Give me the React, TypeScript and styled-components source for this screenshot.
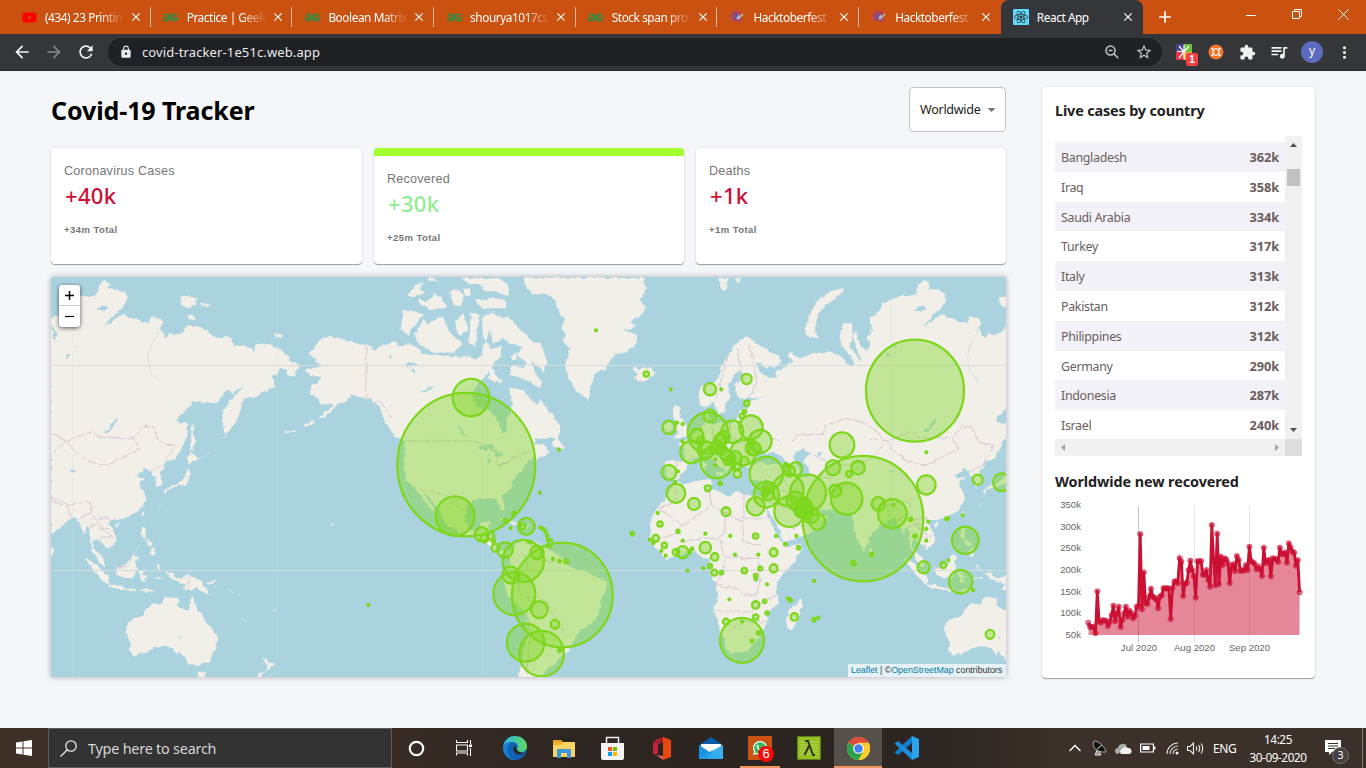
import React from "react";
import styled, { createGlobalStyle, css } from "styled-components";
import { FaYoutube, FaReact, FaWhatsapp } from "react-icons/fa";
import { SiGeeksforgeeks } from "react-icons/si";
import {
  MdArrowBack, MdArrowForward, MdRefresh, MdLock, MdStarBorder, MdExtension,
  MdQueueMusic, MdMoreVert, MdArrowDropDown, MdClose, MdAdd,
} from "react-icons/md";

const ui = `"Noto Sans", "Open Sans", sans-serif`;
const arial = `"Liberation Sans", Arial, sans-serif`;

const Global = createGlobalStyle`
  * { box-sizing: border-box; }
  body { margin: 0; background: #f5f6fa; font-family: ${ui}; overflow: hidden; }
  svg { display: block; flex: none; }
`;

const Screen = styled.div`
  width: 1366px; height: 768px; display: flex; flex-direction: column;
`;

/* ---------- browser ---------- */
const TabStrip = styled.div`
  height: 34px; background: #ca510f; display: flex; padding-left: 9px; flex: none;
`;
const Tab = styled.div<{ $active?: boolean; $last?: boolean }>`
  width: 141.7px; height: 34px; display: flex; align-items: center; padding-left: 12px;
  color: #fff; font-size: 11.8px; letter-spacing: -0.42px; position: relative;
  ${p => p.$active ? css`background: #35363a; border-radius: 8px 8px 0 0;` : !p.$last && css`
    &::after { content: ""; position: absolute; right: 0; top: 7px; width: 1px; height: 20px; background: #eab799; }
  `}
`;
const TabText = styled.span<{ $active?: boolean }>`
  width: 79px; margin: 0 5px 0 8px; white-space: nowrap;
  ${p => !p.$active && css`-webkit-mask-image: linear-gradient(90deg, #000 70%, rgba(0,0,0,.15) 96%);`}
`;
const Fav = styled.span`width: 16px; height: 16px; display: flex; align-items: center; justify-content: center; flex: none;`;
const ReactFav = styled(Fav)`background: #61dafb; color: #222; border-radius: 1px;`;
const NewTab = styled.div`width: 44px; display: flex; align-items: center; justify-content: center; color: #fff;`;
const WinControls = styled.div`
  margin-left: auto; display: flex; gap: 0; height: 29px; align-items: center;
`;
const WinBtn = styled.div`width: 46px; display: flex; justify-content: center;`;
const Toolbar = styled.div`
  height: 37px; background: #35363a; border-bottom: 1px solid #272628; display: flex; align-items: center;
  padding-left: 12px; flex: none; color: #f1f3f4;
`;
const NavBtn = styled.div<{ $dim?: boolean }>`width: 32px; display: flex; color: ${p => (p.$dim ? "#85868a" : "#f1f3f4")};`;
const Omnibox = styled.div`
  width: 1054px; height: 28px; border-radius: 14px; background: #202124; display: flex; align-items: center;
  padding: 0 9px 0 11px; color: #e8eaed; font-size: 13px; letter-spacing: 0.12px;
`;
const Url = styled.span`margin-left: 9px; flex: 1;`;
const OmniIcons = styled.div`display: flex; align-items: center; gap: 16px; color: #c3c5c9;`;
const Extensions = styled.div`display: flex; align-items: center; flex: 1; padding-left: 14px;`;
const Slot = styled.div<{ $w: number }>`width: ${p => p.$w}px; display: flex; position: relative;`;
const ExtBadge = styled.span`
  position: absolute; left: 10px; top: 9px; width: 12px; height: 13px; border-radius: 2px; background: #f13f45;
  color: #fff; font: bold 10px/13px ${arial}; text-align: center;
`;
const Avatar = styled.div`
  width: 22px; height: 22px; border-radius: 50%; background: #5c6bc0; color: #fff; font-size: 12px; line-height: 20px; text-align: center;
`;

/* ---------- page ---------- */
const Page = styled.div`
  height: 657px; flex: none; background: #f5f6fa; padding: 16px 51px 0 51px; display: flex; gap: 36px; align-items: flex-start;
`;
const Left = styled.div`width: 955px;`;
const Header = styled.div`display: flex; justify-content: space-between; height: 45px; margin-bottom: 16px;`;
const Title = styled.h1`margin: 0; font: bold 25px/47px ${ui}; letter-spacing: -0.1px; color: #000; white-space: nowrap;`;
const Select = styled.div`
  width: 97px; height: 45px; border: 1px solid #c4c4c4; border-radius: 4px; background: #fff; display: flex; align-items: center;
  padding: 0 0 0 10px; font-size: 12.6px; letter-spacing: -0.3px; color: #212121; white-space: nowrap; gap: 1px;
`;
const Stats = styled.div`display: grid; grid-template-columns: 311px 310px 310px; gap: 12px; margin-bottom: 13px;`;
const cardShadow = css`box-shadow: 0 1px 1px rgba(0,0,0,.34), 0 0 2px rgba(0,0,0,.12);`;
const Stat = styled.div<{ $active?: boolean }>`
  height: 116px; background: #fff; border-radius: 4px; ${cardShadow}
  padding: 13px 13px 0; ${p => p.$active && css`border-top: 8px solid #a4ff2f;`}
`;
const StatLabel = styled.div`font: 12.6px/20px ${arial}; letter-spacing: 0.22px; color: #757575;`;
const StatValue = styled.div<{ $green?: boolean }>`
  font: 500 22px/28px ${ui}; letter-spacing: 0.3px; padding-left: 1px; color: ${p => (p.$green ? "#90ee90" : "#cc1034")};
`;
const StatTotal = styled.div`font: bold 9.5px/14px ${arial}; letter-spacing: 0.44px; margin-top: 14px; color: #757575;`;

const MapBox = styled.div`
  height: 400px; position: relative; background: #aad3df; box-shadow: 0 0 6px rgba(0,0,0,.3);
`;
const ZoomBox = styled.div`
  position: absolute; left: 8px; top: 8px; width: 21px; height: 42px; background: #fff; border-radius: 3px;
  box-shadow: 0 1px 4px rgba(0,0,0,.65);
`;
const ZoomBtn = styled.div`
  height: 21px; display: flex; align-items: center; justify-content: center;
  &:first-child { border-bottom: 1px solid #ccc; }
`;
const Attribution = styled.div`
  position: absolute; right: 0; bottom: 0; height: 13px; width: 158px; background: rgba(255,255,255,.7);
  font: 8.9px/13px ${arial}; letter-spacing: -0.02px; color: #333; padding-left: 3px; white-space: nowrap;
  a { color: #0078a8; }
`;

const Side = styled.div`
  width: 273px; height: 591px; background: #fff; border-radius: 4px; ${cardShadow} padding: 13px;
`;
const SideTitle = styled.h3`margin: 0; font: bold 14.4px/22px ${ui}; letter-spacing: -0.14px; color: #212121; white-space: nowrap;`;
const TableWrap = styled.div`
  margin-top: 14px; width: 247px; height: 320px; display: grid; grid-template: 303px 17px / 230px 17px;
`;
const Rows = styled.div`padding-top: 6px; overflow: hidden;`;
const Row = styled.div<{ $odd: boolean }>`
  height: 29.8px; padding: 0 6px; display: flex; justify-content: space-between; font-size: 12.4px; line-height: 31px;
  letter-spacing: -0.3px; color: #6a5d5d; background: ${p => (p.$odd ? "#f3f2f8" : "#fff")};
  strong { font-size: 12.8px; letter-spacing: -0.1px; }
`;
const VBar = styled.div`
  background: #f1f1f1; display: flex; flex-direction: column; align-items: center; padding: 7px 0; justify-content: space-between;
`;
const Thumb = styled.div`width: 13px; height: 17px; background: #c1c1c1; margin: 22px 0 auto;`;
const HBar = styled.div`background: #f1f1f1; display: flex; justify-content: space-between; align-items: center; padding: 0 6px;`;
const Corner = styled.div`background: #dcdcdc;`;
const ChartTitle = styled(SideTitle)`margin-top: 15px; letter-spacing: -0.08px;`;
const ChartBox = styled.div`margin-top: 1px; height: 165px; text { font-family: ${arial}; font-size: 9.6px; fill: #666; }`;

/* ---------- taskbar ---------- */
const Taskbar = styled.div`
  height: 40px; flex: none; display: flex; color: #fff;
  background: linear-gradient(90deg, #403027 0, #382b25 390px, #2c2522 600px, #2b2420 850px, #2d2521 940px, #3b312a 1060px, #3b312a 100%);
`;
const Start = styled.div`width: 48px; display: flex; align-items: center; justify-content: center;`;
const Search = styled.div`
  width: 344px; border: 1px solid #5d5b5a; background: #333; display: flex; align-items: center; gap: 11px; padding-left: 11px;
  font-size: 14.4px; letter-spacing: -0.22px; color: #d6d6d6;
`;
const App40 = styled.div<{ $w?: number; $open?: boolean; $on?: boolean }>`
  width: ${p => p.$w || 49}px; display: flex; align-items: center; justify-content: center; position: relative;
  ${p => p.$on && css`background: #56504c;`}
  ${p => p.$open && css`&::after { content: ""; position: absolute; bottom: 0; left: ${p.$on ? 0 : 4}px; right: ${p.$on ? 0 : 4}px; height: 2px; background: #f0965d; }`}
`;
const WaTile = styled.div`
  width: 24px; height: 24px; background: #ca510f; display: flex; align-items: center; justify-content: center; position: relative;
`;
const WaBubble = styled.div`
  width: 15px; height: 15px; border-radius: 50%; background: #35b558; display: flex; align-items: center; justify-content: center;
`;
const Count = styled.span`
  position: absolute; left: 10px; top: 10px; width: 16px; height: 16px; border-radius: 50%; background: #f80808;
  font: 13px/16px ${arial}; text-align: center;
`;
const Tray = styled.div`margin-left: auto; display: flex; align-items: center;`;
const Lang = styled.span`font-size: 12px; letter-spacing: -0.4px; width: 35px;`;
const Clock = styled.div`width: 60px; font-size: 11.8px; letter-spacing: -0.45px; line-height: 18px; text-align: center; white-space: nowrap;`;
const Notice = styled.div`width: 18px; margin: 0 19px 0 17px; position: relative;`;
const NoticeCount = styled.span`
  position: absolute; left: 7px; top: 7px; width: 17px; height: 17px; border-radius: 50%; background: #454140; border: 1px solid #777;
  font-size: 10.5px; line-height: 15px; text-align: center;
`;
const Peek = styled.div`width: 4px; height: 40px; border-left: 1px solid #7d7672;`;

/* ---------- map data; sheets are drawn at three units per pixel ---------- */
const east = [
  "3,125 25,125 40,85 95,62 130,64 145,50 146,32 165,15 181,28 176,42 205,44 227,52 231,75 216,100 195,118 160,156 184,140 205,126 226,116 235,128 260,130 272,142 298,142 302,124 318,128 334,132 337,148 330,158 340,182 352,190 358,172 375,180 400,172 408,156 418,150 460,158 482,178 500,190 535,185 546,195 552,213 600,215 612,228 618,207 660,208 690,222 715,245 720,262 738,262 750,278 735,290 732,307 715,300 708,285 690,278 686,290 682,300 665,302 672,315 678,335 655,345 630,358 615,370 600,365 578,372 573,385 578,395 568,405 566,430 550,448 540,465 528,478 522,468 516,430 520,405 540,380 562,355 578,336 562,343 546,358 545,348 530,345 512,368 506,378 490,384 430,380 378,435 395,446 410,445 413,480 395,520 372,555 350,560 345,575 330,590 336,608 337,630 318,635 315,603 305,603 300,588 285,580 275,592 255,600 270,610 290,608 268,622 272,635 284,655 288,672 270,705 240,722 210,735 185,735 175,745 195,775 200,800 172,825 165,812 150,800 138,792 130,797 128,818 145,835 160,850 166,877 150,868 140,845 125,825 120,790 118,762 112,755 103,776 90,752 82,735 75,725 50,740 30,757 3,778",
  "425,960 434,975 440,1000 455,1015 465,1040 485,1060 502,1085 500,1110 490,1130 478,1162 455,1165 440,1172 412,1165 405,1145 395,1140 388,1130 380,1140 368,1120 340,1112 310,1120 290,1130 255,1142 238,1132 243,1110 228,1070 230,1045 255,1030 280,1020 290,1000 310,985 335,990 342,970 358,965 388,972 380,990 400,1003 418,1008 420,975",
  "442,1190 468,1190 462,1210 448,1210", "635,1138 647,1155 658,1164 671,1163 660,1182 640,1195 651,1180 645,1165", "642,1192 633,1210 620,1210 632,1192",
  "345,893 368,893 370,905 388,910 412,900 450,915 460,935 482,957 455,950 440,935 425,948 398,943 408,930 375,915 360,905",
  "198,880 215,875 240,856 250,838 267,848 255,860 262,880 248,910 225,908 202,900", "268,892 292,882 275,897 293,905 279,908 290,922 272,918",
  "103,847 125,858 150,880 178,910 175,927 155,915 130,885", "173,929 200,930 230,940 258,943 258,948 220,944 178,937", "265,944 290,943 318,946 290,950",
  "275,760 286,757 288,775 286,790 297,800 275,787", "288,795 308,800 302,815 290,808", "298,828 315,815 317,838 305,844", "274,715 285,708 280,730", "195,745 209,742 202,759",
  "415,575 423,595 412,628 390,632 370,637 352,642 347,660 340,648 355,634 380,628 400,612 410,595", "422,533 447,553 425,562 415,568 411,556",
  "425,445 432,460 430,480 439,500 428,515 431,528 421,524 424,480", "675,178 690,173 699,182 675,189", "390,65 410,62 440,70 438,92 410,98 395,90", "452,82 482,90 478,97 455,94", "413,122 430,123 434,136 415,132",
  "775,235 800,215 802,200 840,182 880,195 915,200 935,212 965,212 965,370 930,368 905,358 885,380 865,385 850,402 820,427 800,433 845,395 850,388 810,388 805,370 780,355 785,330 800,325 815,305 780,303 765,285 800,277 820,272 800,262 795,250",
  "760,450 790,438 795,442 765,455", "700,470 735,466 738,470 702,475", "3,815 12,830 8,842 3,840", "468,925 495,915 490,925 472,930", "844,744 853,748 848,753", "320,870 330,868 328,890", "310,908 340,906 340,911 312,911", "575,1028 592,1042 588,1043", "535,940 548,950 545,954", "665,1010 680,1000 675,1012",
];
const americas = [
  "0,205 20,212 45,228 60,212 80,210 105,198 115,212 150,208 175,220 185,235 210,240 240,240 272,245 300,245 330,240 345,255 365,240 372,205 385,202 392,222 425,215 420,250 402,262 395,280 425,325 400,310 385,292 350,330 335,365 350,395 385,405 410,430 428,475 440,470 440,430 452,410 455,385 447,338 490,345 510,370 530,390 540,370 560,400 600,450 600,480 580,490 530,492 518,510 545,505 570,532 530,555 520,545 500,565 480,590 460,615 455,640 425,660 434,705 425,708 412,672 380,670 340,675 318,695 315,735 330,765 355,770 365,742 388,740 385,765 375,780 395,783 412,800 405,820 425,828 445,825 455,825 475,800 510,795 545,810 580,830 615,855 640,880 690,895 740,920 745,935 725,970 715,1020 690,1050 655,1070 640,1100 625,1130 600,1145 590,1165 560,1180 545,1212 475,1212 485,1150 500,1080 500,1020 450,970 428,915 430,890 450,865 450,840 425,838 400,825 375,800 340,785 300,775 255,745 240,710 210,670 192,652 225,710 215,705 180,660 165,640 140,615 130,580 135,520 130,495 105,485 75,440 60,400 30,370 0,370",
  "165,175 190,135 205,150 225,130 250,125 265,170 310,205 280,232 220,235 195,215 170,205", "130,105 155,110 190,118 170,145 160,155 145,180 122,165", "370,125 400,112 420,125 455,130 465,150 500,180 520,200 545,210 562,265 550,290 515,258 525,290 545,320 540,340 490,310 450,300 455,270 490,280 500,262 470,240 485,215 450,205 430,190 400,205 390,160 375,210 365,150", "285,135 310,118 325,160 305,185 290,165", "332,115 362,118 355,150 350,165 347,215 325,200 330,165", "350,72 380,75 398,68 438,75 437,100 365,100 352,88", "300,8 380,12 420,8 448,35 445,65 405,48 370,50 360,25 330,28", "175,70 200,82 222,58 240,65 262,98 210,105 175,80", "270,52 292,42 312,60 305,95 280,90", "143,60 165,30 188,20 180,42 192,50 160,68", "210,8 240,20 200,15", "310,42 330,40 330,65 315,62", "395,288 430,320 405,322 385,310", "455,240 470,235 468,258 455,255", "590,478 598,500 620,520 580,516 578,503",
  "490,8 500,40 520,60 555,55 585,75 600,120 615,130 605,160 618,180 608,200 630,220 615,270 625,310 650,350 668,360 685,375 692,330 705,295 735,283 760,240 800,230 830,205 832,180 790,165 830,155 808,140 845,120 858,95 840,75 855,50 840,35 855,8",
  "818,278 830,275 832,285 870,275 888,295 852,322 820,310 832,300", "415,730 445,733 478,748 455,746 430,738", "480,748 515,755 490,762", "455,760 466,760 460,764",
];
const west = [
  "320,183 345,198 352,210 385,225 420,245 423,262 405,277 375,277 360,265 350,262 358,290 385,308 370,320 392,306 410,310 408,290 440,275 440,268 458,262 442,238 455,232 480,250 520,235 555,230 585,235 605,245 620,268 642,272 635,245 605,215 598,180 612,145 636,145 638,190 628,215 650,240 665,262 645,205 640,190 645,165 655,205 680,228 690,215 702,215 680,190 692,172 712,160 690,150 692,130 720,105 740,90 740,742 715,757 690,782 682,810 672,829 660,810 645,775 638,740 635,715 622,722 600,708 570,705 545,705 525,695 510,692 490,675 475,660 480,680 500,712 520,712 535,690 537,708 560,728 540,755 510,775 470,790 430,802 420,770 395,725 372,685 378,655 380,615 360,617 330,612 325,590 330,570 365,560 400,565 440,565 425,545 400,530 380,535 360,525 345,535 335,565 320,575 300,572 290,580 305,600 290,608 275,592 265,568 245,548 232,528 222,535 250,560 268,577 258,597 250,578 225,560 205,540 180,545 165,548 155,560 140,575 130,595 110,612 90,612 78,605 76,560 85,555 130,557 135,540 128,515 115,508 125,498 145,492 155,480 170,470 185,455 195,450 192,425 205,412 208,440 220,450 240,445 270,445 290,435 300,405 325,400 320,385 335,375 375,365 350,368 300,372 287,355 285,330 310,300 300,285 285,300 265,330 265,350 272,365 260,385 255,410 235,418 220,380 205,395 180,390 175,350 190,330 230,320 245,275 265,240 290,205",
  "105,622 130,628 165,618 207,612 216,618 210,640 240,650 265,667 285,650 330,662 365,662 372,690 385,725 405,770 427,802 440,815 485,805 485,820 460,865 430,895 410,925 410,950 418,985 385,1010 380,1045 360,1085 320,1128 270,1137 262,1125 240,1060 220,1005 235,960 228,930 210,890 212,850 190,850 165,830 130,838 80,852 60,835 35,805 25,790 32,775 30,740 50,700 80,670 90,640",
  "482,968 487,990 462,1062 443,1062 438,1035 450,1000 470,990", "105,388 125,400 117,412 130,440 148,470 140,485 100,492 118,470 105,465 115,445 100,430 98,405", "92,435 98,465 75,475 70,450", "610,37 610,50 560,90 535,115 525,155 532,190 502,182 495,160 510,120 530,80 570,50",
  "235,8 265,8 262,35 250,47 238,25", "285,8 307,8 292,24", "692,825 703,840 696,853", "183,560 198,565 195,590 185,590", "225,590 252,592 245,602 228,598", "355,628 378,623 365,633", "3,0 18,40 0,60 0,0",
];
const lakes = [
  "470,530 490,522 512,535 496,548 490,560 505,575 508,602 490,607 480,590 470,565 460,550",
  "370,560 400,552 435,562 400,570 375,567",
  "535,530 545,535 540,545 532,540", "345,910 355,912 352,925 343,920",
];
const lakesA = ["160,472 178,470 200,440 203,427 185,445 178,462", "140,100 165,92 172,105 140,108", "3,150 15,165 22,200 12,190", "60,588 76,586 76,590 62,592", "50,240 60,232 62,238 52,250", "76,212 84,215 77,222", "385,1088 396,1088 392,1094"];
const lakesB = ["355,520 372,508 398,510 405,522 375,525", "385,530 390,570 382,565", "400,528 430,535 412,550", "412,570 440,562 425,575", "292,450 300,455 318,485 308,480", "130,270 150,260 175,268 150,275", "150,285 165,280 165,300", "185,350 225,330 210,345 180,358", "85,245 95,240 92,252"];
const bordersA = "M3,475L20,480L50,500L85,485L130,470L145,485L210,488L250,490L265,515L270,523L240,535L215,550L170,572L115,560L75,530L50,500L25,515L3,545M250,490L280,453L310,458L325,495L350,510L375,508L365,530L350,545L345,570L300,588M3,668L60,690L110,677L125,690L120,715L85,735M3,680L55,695L60,730M120,715L140,735L160,727L185,735M140,740L150,760L180,765M120,755L150,745L165,770L188,782M150,800L155,787L188,787M200,878L230,875L245,852M416,905V945";
const bordersB = "M18,212V370L40,385L60,378L95,430M130,498H333L365,508L410,530L415,572L470,545L515,525M182,648L250,658L270,680L310,705M480,830L505,855L500,880L470,900L480,960L510,970M530,965L560,980L575,1010L610,1070M500,1010L510,1080L500,1200M540,830L560,860L590,860";
const bordersC = "M325,210L340,260L350,320L330,365M290,220L305,285M265,240L245,300L230,370M690,490L740,497M460,500L470,480L550,478L555,450L620,430L680,445L730,490M520,540L560,560L620,570L680,560L735,510M310,400L345,430L400,490L420,500M270,445L275,490L320,510M215,450L220,500L200,530M510,600L570,610L610,590M560,640L600,625L650,640M110,640L105,680L55,700L130,750L100,780L55,790M130,750L215,690L205,640M215,690L255,715V760L240,790L195,790L120,800M312,650V730H395M255,715L310,740V800L360,810M240,790L250,840L310,850L360,850M255,850L250,890L225,930L290,940L310,960L350,960L360,910L355,860M222,1005L270,1010L330,1010L375,975L410,960M265,1075L305,1040L345,1040L380,1040M385,680L440,700L500,730M380,640L420,640L480,680M440,760L500,750M410,580L450,640M110,590V560M140,555L190,545";

type Mark = [number, number, number];
const marksB: Mark[] = [
  [333,368,55],[319,569,207],[285,723,58],[365,778,21],[373,790,12],[392,783,11],[400,797,5],[407,818,12],[435,825,23],[499,754,25],[487,755,9],[490,858,62],[531,832,20],[452,900,25],[463,956,63],[607,960,151],[538,1004,25],[585,1048,13],[497,1103,56],[545,1136,67],
  [708,166,3],[25,990,3],[859,297,8],[933,343,3],[597,524,3],[539,653,3],[462,716,5],[436,737,5],[452,759,3],[541,758,3],[550,762,4],[557,770,4],[562,782,4],[564,796,4],[567,812,5],[574,796,3],[505,800,3],[513,803,3],[579,852,3],[599,859,4],[619,859,6],[599,1126,5],[817,776,5],
];
const marksC: Mark[] = [
  [825,347,147],[669,731,181],[204,474,61],[87,457,20],[210,423,19],[210,343,18],[320,312,15],[320,385,8],[313,410,5],[306,423,7],[244,343,3],[111,443,3],[128,447,3],[127,499,3],
  [277,470,33],[333,457,35],[361,499,34],[170,482,20],[182,497,12],[154,531,33],[198,525,25],[242,495,19],[250,488,19],[231,560,49],[231,517,20],[247,525,14],[218,520,10],[257,540,16],[263,558,12],[309,533,38],[286,548,19],[313,558,13],[338,520,21],[344,522,19],[275,548,12],[294,573,10],[292,597,11],[270,560,8],[278,580,5],[226,553,3],[226,571,3],[193,553,3],[182,463,3],
  [87,592,22],[114,589,3],[105,621,3],[108,655,28],[162,687,18],[203,640,9],[241,625,5],[258,710,13],[379,596,50],[379,659,38],[382,643,14],[384,658,18],[376,657,8],[347,694,27],[444,645,47],[504,654,54],[448,710,45],[467,677,27],[487,703,25],[485,705,20],[500,711,20],[491,697,26],[512,720,24],[532,740,24],[440,578,12],[449,588,16],[467,582,20],[437,568,4],
  [579,578,22],[606,510,37],[654,578,20],[627,597,9],[620,671,47],[586,647,18],[715,687,20],[757,716,43],[760,690,3],[859,630,28],[859,532,3],[1013,614,15],[1085,622,26],[976,796,40],[962,920,35],[851,877,18],[910,870,9],[925,856,3],[999,945,3],[1050,1078,13],[968,721,3],[919,731,4],[923,731,4],[865,740,3],[859,762,3],[859,797,3],[812,733,5],[825,783,5],[695,839,5],[640,865,7],
  [53,714,3],[60,747,8],[114,769,5],[196,776,3],[271,783,3],[347,783,8],[408,783,3],[469,783,3],[436,808,4],[476,818,5],[47,790,10],[29,794,3],[40,803,4],[73,811,8],[64,828,3],[77,842,3],[108,832,10],[128,832,18],[128,797,3],[149,832,4],[156,822,4],[196,818,17],[224,846,11],[285,839,3],[355,839,3],[401,832,12],[401,880,12],[361,880,6],[313,887,8],[142,887,3],[190,880,3],[210,873,6],[223,893,9],[244,893,5],[347,902,5],[347,911,4],[381,928,3],[268,973,3],[374,979,5],[347,990,11],[381,1014,5],[347,1026,8],[306,1040,3],[258,1040,9],[306,1096,66],[336,1098,4],[356,1074,5],[522,918,3],[443,970,3],[451,975,5],[463,1026,11],[522,1034,5],[535,1028,3],
];

const Polys = ({ list, fill = "#f2efe9" }: { list: string[]; fill?: string }) => (
  <>{list.map((p, i) => <polygon key={i} points={p} fill={fill} />)}</>
);
const Marks = ({ list }: { list: Mark[] }) => (
  <g fill="#7dd71d" fillOpacity={0.4} stroke="#7dd71d" strokeWidth={6.8}>
    {list.map(([x, y, r], i) => <ellipse key={i} cx={x} cy={y} rx={r} ry={r * (r > 100 ? 1.04 : 1.02)} />)}
  </g>
);
const EastSheet = () => (
  <>
    <Polys list={east} />
    <Polys list={lakesA} fill="#aad3df" />
    <path d="M325,155L322,180L303,210L295,255L303,290L330,320" stroke="#cfe0e0" strokeWidth={3} fill="none" />
    <path d={bordersA} fill="none" stroke="#d8c8d2" strokeWidth={3} />
    <path d="M445,553L480,532M515,490L530,478M250,840L272,808M325,700L342,683" stroke="#e5e9e5" strokeWidth={2} />
  </>
);
const WorldMap = () => (
  <svg width="955" height="400" viewBox="0 0 955 400">
    <defs>
      <filter id="coast" x="0" y="0" width="100%" height="100%">
        <feTurbulence type="fractalNoise" baseFrequency="0.22" numOctaves="2" seed="4" />
        <feDisplacementMap in="SourceGraphic" scale="4" xChannelSelector="R" yChannelSelector="G" />
      </filter>
    </defs>
    <g filter="url(#coast)">
      <rect width="955" height="400" fill="#aad3df" />
      <g transform="translate(-1 -2) scale(.33333)"><EastSheet /></g>
      <g transform="translate(818 -2) scale(.33333)"><EastSheet /></g>
      <g transform="translate(309 -2) scale(.33333)">
        <Polys list={americas} /><Polys list={lakesB} fill="#aad3df" />
        <path d={bordersB} fill="none" stroke="#d8c8d2" strokeWidth={3} />
      </g>
      <g transform="translate(589 -2) scale(.33333)">
        <Polys list={west} /><Polys list={lakes} fill="#aad3df" />
        <path d={bordersC} fill="none" stroke="#d8c8d2" strokeWidth={3} />
      </g>
    </g>
    <path d="M0 88.5H955M0 293.5H955" stroke="#d6dcdc" strokeWidth="1" />
    <path d="M21.5 0V400M226.5 0V400M431.5 0V400M840.5 0V400" stroke="#c8dee4" strokeWidth="1" opacity=".28" />
    <g transform="translate(309 -2) scale(.33333)"><Marks list={marksB} /></g>
    <g transform="translate(589 -2) scale(.33333)"><Marks list={marksC} /></g>
  </svg>
);

/* ---------- chart: one value per day from 3 June, in thirds of a pixel ---------- */
const days = [668,680,682,680,700,574,664,668,660,662,662,678,666,645,617,664,640,620,681,660,640,620,650,632,640,655,648,620,618,402,628,517,610,612,590,566,590,594,598,625,590,586,564,566,564,566,657,564,545,543,550,474,485,588,552,548,510,482,510,528,593,483,484,483,524,524,510,540,560,375,480,556,401,552,470,495,475,478,490,549,500,492,513,468,480,513,510,512,495,510,440,484,487,492,508,500,508,528,443,490,482,480,529,475,476,478,486,443,462,462,457,488,430,442,455,458,497,480,577];
const pts = days.map((v, i): [number, number] => [Math.round((145 + i * 5.37) / 3 * 10) / 10 - 15, Math.round(v / 3 * 10) / 10 - 94]);
const Chart = () => {
  const line = pts.map(p => p.join(",")).join(" ");
  return (
    <svg width="250" height="165" viewBox="0 0 250 165">
      <path d="M83.5 12V149" stroke="#c9c9c9" />
      <path d="M139.5 12V149M194.5 12V149" stroke="#e6e6e6" />
      <polygon points={`33.5,141 ${line} 244.5,141`} fill="#cc1034" fillOpacity=".5" />
      <polyline points={line} fill="none" stroke="#cc1034" strokeWidth="2.8" strokeLinejoin="round" />
      {pts.map(([x, y], i) => <circle key={i} cx={x} cy={y} r="2.6" fill="#cc1034" fillOpacity=".5" stroke="#cc1034" strokeOpacity=".6" />)}
      {["350k", "300k", "250k", "200k", "150k", "100k", "50k"].map((t, i) => (
        <text key={t} x="26" y={14 + i * 21.65} textAnchor="end">{t}</text>
      ))}
      <text x="84" y="157" textAnchor="middle">Jul 2020</text>
      <text x="139.5" y="157" textAnchor="middle">Aug 2020</text>
      <text x="194.5" y="157" textAnchor="middle">Sep 2020</text>
    </svg>
  );
};

/* ---------- small drawings ---------- */
const HackIcon = () => (
  <svg width="14" height="14" viewBox="0 0 14 14" fill="none" strokeWidth="1.5">
    <path d="M3 2v9M6 0v12M9 1v11" stroke="#a63d84" /><path d="M1 5l4 4M4 3l7 7M8 3l-3 7" stroke="#6a4fa0" />
    <path d="M13 4L8 9M9 5l-2 4" stroke="#a8c4d8" /><path d="M0 8h3M10 11h2" stroke="#d04560" />
  </svg>
);
const Geek = () => <SiGeeksforgeeks size={15} color="#2f8d46" stroke="#2f8d46" strokeWidth={0.7} />;
const ZoomOutIcon = () => (
  <svg width="14" height="14" viewBox="0 0 14 14" fill="none" stroke="#c3c5c9" strokeWidth="1.5">
    <circle cx="5.500" cy="5.500" r="4.500" /><path d="M3.500 5.500h4M8.800 8.800l4.400 4.400" />
  </svg>
);
const EdgeIcon = () => (
  <svg width="24" height="24" viewBox="0 0 24 24">
    <defs>
      <linearGradient id="eg" x1="0" x2="1"><stop stopColor="#2fb6e8" /><stop offset="1" stopColor="#5fd663" /></linearGradient>
    </defs>
    <circle cx="12" cy="12" r="12" fill="#0e63b3" />
    <path d="M0 11C1 4 6 0 12 0c7 0 12 5 12 10 0 4-3 6-6 6-4 0-5-2-4-3 2-3 0-7-5-7-4 0-8 2-9 5z" fill="url(#eg)" />
    <path d="M0 11c1-4 5-5.500 9-5-4 2-6 6-4 11 1 4 4 6 7 7C5 24 0 18 0 11z" fill="#1b80d4" />
    <path d="M12.500 9.500C9 11 10 18 16 18.600c3 .3 5-1 6.500-2 .8-.2.9.3.6.8L24 16c-2 2-7 1-9-1-2-2-2-3.500-2.500-5.500z" fill="#2b2420" />
  </svg>
);
const ExplorerIcon = () => (
  <svg width="22" height="19" viewBox="0 0 22 19">
    <path d="M0 1h8l2 2v4H0z" fill="#e3a21a" /><path d="M0 3h22v15H0z" fill="#fcd462" /><path d="M0 3h10L8 6H0z" fill="#f0b429" />
    <path d="M4 10h14v9h-4v-5H8v5H4z" fill="#3a96dd" />
  </svg>
);
const StoreIcon = () => (
  <svg width="23" height="25" viewBox="0 0 23 25">
    <path d="M5.500 7V1.500h12V7" fill="none" stroke="#eee" strokeWidth="1.500" /><path d="M0 7h23v15q0 2-2 2H2q-2 0-2-2z" fill="#f4f4f4" />
    <path d="M7 11h4v4H7z" fill="#f25022" /><path d="M12 11h4v4h-4z" fill="#7fba00" /><path d="M7 16h4v4H7z" fill="#00a4ef" /><path d="M12 16h4v4h-4z" fill="#ffb900" />
  </svg>
);
const OfficeIcon = () => (
  <svg width="18" height="23" viewBox="0 0 18 23">
    <path d="M0 6l4-4 7-2v4L5 7v9l-3 2-2-2z" fill="#c2243b" /><path d="M10 0l8 3v17l-8 3z" fill="#e8470e" /><path d="M3 18l7 1v4z" fill="#e05a6a" /><path d="M10 0l-6 3-3 4 9-3z" fill="#a11f2b" />
  </svg>
);
const MailIcon = () => (
  <svg width="24" height="23" viewBox="0 0 24 23">
    <path d="M0 8l12-8 12 8v3H0z" fill="#0a5ba8" /><path d="M2 7h20v8H2z" fill="#fff" /><path d="M0 8l12 8 12-8v14H0z" fill="#1b93e2" /><path d="M12 14l12-6v14H9z" fill="#41b8f0" opacity=".8" /><path d="M0 22l13-9 11 9z" fill="#2aa3ec" opacity=".6" />
  </svg>
);
const LambdaIcon = () => (
  <svg width="24" height="24" viewBox="0 0 24 24">
    <path d="M0 0h24v24H0z" fill="#5e7a25" /><path d="M1 1h22v22H1z" fill="#94c11f" />
    <path d="M3 6h18M3 9h18M3 12h18M3 15h18M3 18h18" stroke="#b7d664" /><path d="M8 5h3l5 14h2M12 10L7.500 19" fill="none" stroke="#2b3410" strokeWidth="1.900" />
  </svg>
);
const ChromeIcon = () => (
  <svg width="23" height="23" viewBox="0 0 24 24">
    <circle cx="12" cy="12" r="12" fill="#fbcf2b" />
    <path d="M12 12L1.600 6A12 12 0 0 1 22.400 6z" fill="#df4a3c" /><path d="M1.600 6A12 12 0 0 0 12 24l5-9-5-3z" fill="#2ca24c" /><path d="M22.400 6H12v6l5.200 3L12 24A12 12 0 0 0 22.400 6z" fill="#fbcf2b" />
    <circle cx="12" cy="12" r="5.600" fill="#fff" /><circle cx="12" cy="12" r="4.400" fill="#4580ec" />
  </svg>
);
const CodeIcon = () => (
  <svg width="24" height="24" viewBox="0 0 24 24">
    <path d="M17 0l7 3v18l-7 3z" fill="#2ca5ee" /><path d="M17 0v7L3 19l-3-2v-1z" fill="#0f7dc9" /><path d="M17 24v-7L3 5 0 7v1z" fill="#1b8ddb" />
  </svg>
);
const W = "#fff";

const tabs: [string, React.ReactNode][] = [
  ["(434) 23 Printin", <FaYoutube size={15} color="#f00" />],
  ["Practice | Geek", <Geek />], ["Boolean Matrix", <Geek />], ["shourya1017cs", <Geek />], ["Stock span pro", <Geek />],
  ["Hacktoberfest", <HackIcon />], ["Hacktoberfest", <HackIcon />],
];
const countries: [string, string][] = [
  ["Bangladesh", "362k"], ["Iraq", "358k"], ["Saudi Arabia", "334k"], ["Turkey", "317k"], ["Italy", "313k"],
  ["Pakistan", "312k"], ["Philippines", "312k"], ["Germany", "290k"], ["Indonesia", "287k"], ["Israel", "240k"],
];

export default function App() {
  return (
    <Screen>
      <Global />
      <TabStrip>
        {tabs.map(([t, icon], i) => (
          <Tab key={i} $last={i === 6}><Fav>{icon}</Fav><TabText>{t}</TabText><MdClose size={14} /></Tab>
        ))}
        <Tab $active><ReactFav><FaReact size={14} /></ReactFav><TabText $active>React App</TabText><MdClose size={14} /></Tab>
        <NewTab><MdAdd size={20} /></NewTab>
        <WinControls>
          <WinBtn><svg width="10" height="10"><path d="M0 5.500h10" stroke={W} /></svg></WinBtn>
          <WinBtn><svg width="11" height="11" fill="none" stroke={W}><path d="M.5 2.500h7v7h-7zM2.500 2.500v-2h7v7h-2" /></svg></WinBtn>
          <WinBtn><svg width="11" height="11" stroke={W}><path d="M.5.5l10 10M10.500.5l-10 10" /></svg></WinBtn>
        </WinControls>
      </TabStrip>
      <Toolbar>
        <NavBtn><MdArrowBack size={20} /></NavBtn>
        <NavBtn $dim><MdArrowForward size={20} /></NavBtn>
        <NavBtn><MdRefresh size={20} /></NavBtn>
        <Omnibox>
          <MdLock size={14} /><Url>covid-tracker-1e51c.web.app</Url>
          <OmniIcons><ZoomOutIcon /><MdStarBorder size={18} /></OmniIcons>
        </Omnibox>
        <Extensions>
          <Slot $w={32}>
            <svg width="16" height="16"><path d="M0 0h8v8H0z" fill="#4d3f8f" /><path d="M8 0h8v8H8z" fill="#6fbf3a" /><path d="M0 8h8v8H0z" fill="#e13b48" /><path d="M8 8h8v8H8z" fill="#f1b13a" /><path d="M8 8L3 2M8 8V1M8 8l5-6M8 8L1 7M8 8l-5 6M8 8v7" stroke="#fff" strokeWidth="1.200" /></svg>
            <ExtBadge>1</ExtBadge>
          </Slot>
          <Slot $w={31}>
            <svg width="16" height="16" viewBox="0 0 16 16"><circle cx="8" cy="8" r="7.500" fill="#f4762b" /><path d="M5 6q3-2.500 6 0M5 10q3 2.500 6 0M6 5.500q-2 2.500 0 5M10 5.500q2 2.500 0 5" fill="none" stroke="#fff" strokeWidth="1.100" /><path d="M3.500 4l2 2M12.500 4l-2 2M3.500 12l2-2M12.500 12l-2-2" stroke="#fff" strokeWidth="1.500" /></svg>
          </Slot>
          <Slot $w={30}><MdExtension size={17} /></Slot>
          <Slot $w={32}><MdQueueMusic size={20} /></Slot>
          <Slot $w={34}><Avatar>y</Avatar></Slot>
          <MdMoreVert size={19} />
        </Extensions>
      </Toolbar>

      <Page>
        <Left>
          <Header>
            <Title>Covid-19 Tracker</Title>
            <Select>Worldwide<MdArrowDropDown size={19} color="#757575" /></Select>
          </Header>
          <Stats>
            <Stat><StatLabel>Coronavirus Cases</StatLabel><StatValue>+40k</StatValue><StatTotal>+34m Total</StatTotal></Stat>
            <Stat $active><StatLabel>Recovered</StatLabel><StatValue $green>+30k</StatValue><StatTotal>+25m Total</StatTotal></Stat>
            <Stat><StatLabel>Deaths</StatLabel><StatValue>+1k</StatValue><StatTotal>+1m Total</StatTotal></Stat>
          </Stats>
          <MapBox>
            <WorldMap />
            <ZoomBox>
              <ZoomBtn><svg width="9" height="9"><path d="M4.500 0v9M0 4.500h9" stroke="#000" strokeWidth="1.500" /></svg></ZoomBtn>
              <ZoomBtn><svg width="9" height="9"><path d="M0 4.500h9" stroke="#000" strokeWidth="1.200" /></svg></ZoomBtn>
            </ZoomBox>
            <Attribution><a>Leaflet</a> | ©<a>OpenStreetMap</a> contributors</Attribution>
          </MapBox>
        </Left>
        <Side>
          <SideTitle>Live cases by country</SideTitle>
          <TableWrap>
            <Rows>{countries.map(([n, v], i) => <Row key={n} $odd={i % 2 === 0}><span>{n}</span><strong>{v}</strong></Row>)}</Rows>
            <VBar>
              <svg width="7" height="4"><path d="M0 4l3.500-4L7 4z" fill="#505050" /></svg>
              <Thumb />
              <svg width="7" height="4"><path d="M0 0l3.500 4L7 0z" fill="#505050" /></svg>
            </VBar>
            <HBar>
              <svg width="4" height="7"><path d="M4 0L0 3.500 4 7z" fill="#a3a3a3" /></svg>
              <svg width="4" height="7"><path d="M0 0l4 3.500L0 7z" fill="#a3a3a3" /></svg>
            </HBar>
            <Corner />
          </TableWrap>
          <ChartTitle>Worldwide new recovered</ChartTitle>
          <ChartBox><Chart /></ChartBox>
        </Side>
      </Page>

      <Taskbar>
        <Start><svg width="16" height="16"><path d="M0 2.500l6.500-1v6H0zM7.500 1.300L16 0v7.500H7.500zM0 8.500h6.500v6L0 13.600zM7.500 8.500H16V16l-8.500-1.200z" fill={W} /></svg></Start>
        <Search>
          <svg width="17" height="17" fill="none" stroke="#e8e8e8" strokeWidth="1.300"><circle cx="11" cy="6" r="5.200" /><path d="M7.300 9.700L.5 16.500" /></svg>
          Type here to search
        </Search>
        <App40 $w={48}><svg width="17" height="17"><circle cx="8.500" cy="8.500" r="6.700" fill="none" stroke={W} strokeWidth="2.200" /></svg></App40>
        <App40 $w={48}><svg width="17" height="16" fill="none" stroke={W} strokeWidth="1.100"><path d="M.5 0v2.500h11V0M.5 5h11v6H.5zM.5 15.500V13h11v2.500M14.500 0v4M14.500 8v8" /><path d="M13 4.500h3v2.500h-3z" fill={W} stroke="none" /></svg></App40>
        <App40 $w={54}><EdgeIcon /></App40>
        <App40 $w={44}><ExplorerIcon /></App40>
        <App40 $w={53}><StoreIcon /></App40>
        <App40 $w={46}><OfficeIcon /></App40>
        <App40 $w={51}><MailIcon /></App40>
        <App40 $w={48} $open><WaTile><WaBubble><FaWhatsapp size={16} color="#fff" /></WaBubble><Count>6</Count></WaTile></App40>
        <App40 $w={50}><LambdaIcon /></App40>
        <App40 $w={48} $open $on><ChromeIcon /></App40>
        <App40 $w={50}><CodeIcon /></App40>
        <Tray>
          <Slot $w={23}><svg width="12" height="8" fill="none" stroke={W} strokeWidth="1.300"><path d="M.5 7L6 1.500 11.500 7" /></svg></Slot>
          <Slot $w={23}><svg width="17" height="16"><path d="M2 1C-1 6 4 13 14 12 13 7 7 1 2 1z" fill="#111" stroke="#aaa" /><path d="M5 9l5-4M5 10l-2 5h6l-2-4" stroke="#ddd" fill="#999" /></svg></Slot>
          <Slot $w={25}><svg width="17" height="11"><path d="M3 11a3 3 0 0 1 0-6 5 5 0 0 1 9-2z" fill="#aaa" /><path d="M6 11a3 3 0 0 1 1-5 4 4 0 0 1 6-1 3 3 0 0 1 1 6z" fill="#f2f2f2" /></svg></Slot>
          <Slot $w={26}><svg width="16" height="10"><path d="M.6 1h12.800v8H.6z" fill="none" stroke={W} strokeWidth="1.200" /><path d="M2.500 3h7v4h-7z" fill={W} /><path d="M14 3.500h1.500v3H14z" fill={W} /></svg></Slot>
          <Slot $w={21}><svg width="13" height="13" fill="none" stroke="#ddd" strokeWidth="1.100"><path d="M1 12A11 11 0 0 1 12 1M4 12a8 8 0 0 1 8-8M7 12a5 5 0 0 1 5-5" /><circle cx="11" cy="11" r="1.500" fill="#fff" stroke="none" /></svg></Slot>
          <Slot $w={26}><svg width="17" height="13" fill="none" stroke="#eee" strokeWidth="1.100"><path d="M.5 4.500H3l3.500-3.500v11L3 8.500H.5zM9 4.500q1.500 2 0 4M11.500 3q2.500 3.500 0 7M14 1.500q3.500 5 0 10" /></svg></Slot>
          <Lang>ENG</Lang>
          <Clock>14:25<br />30-09-2020</Clock>
          <Notice><svg width="16" height="16"><path d="M0 0h16v12h-9l-3 3v-3H0z" fill={W} /><path d="M3 3.500h10M3 6h10M3 8.500h7" stroke="#3b312a" /></svg><NoticeCount>3</NoticeCount></Notice>
          <Peek />
        </Tray>
      </Taskbar>
    </Screen>
  );
}
